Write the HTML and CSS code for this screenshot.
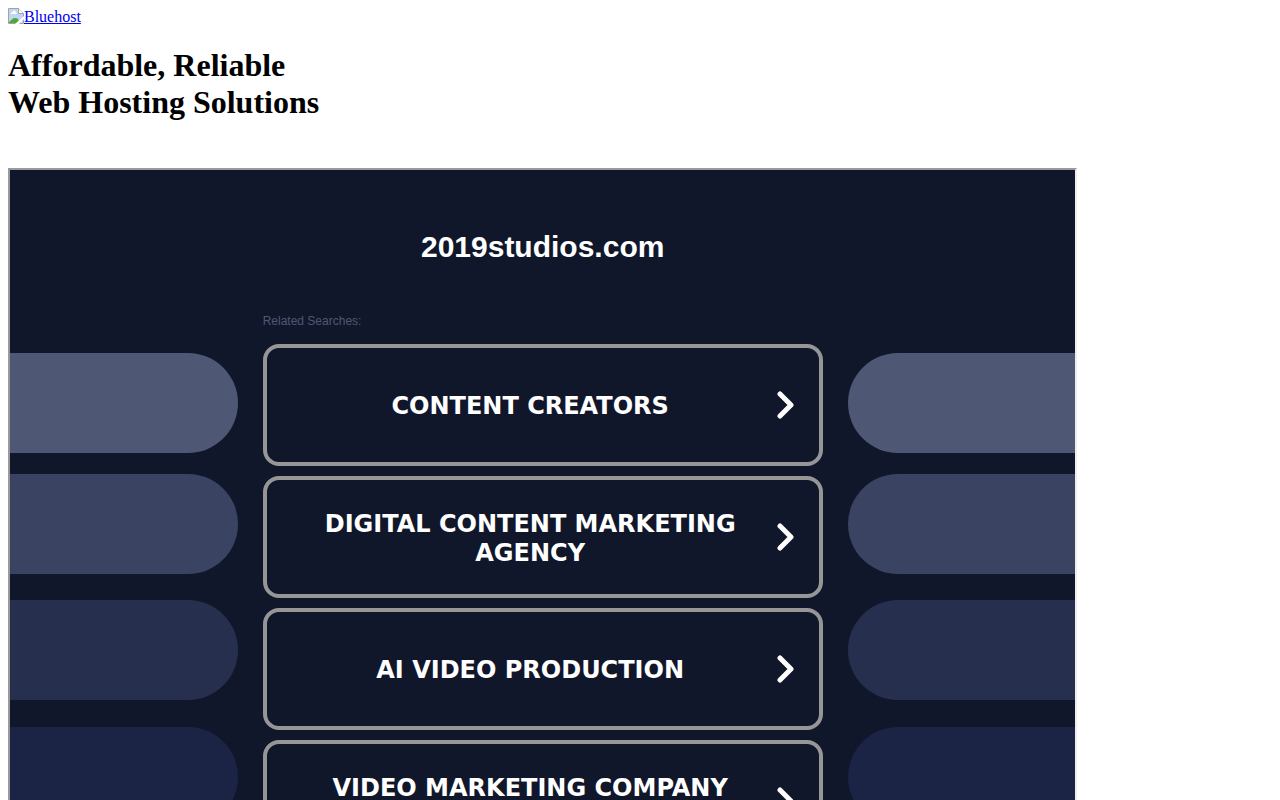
FILE: index.html
```
<!DOCTYPE html>
<html lang="en">
<head>
	<meta charset="UTF-8">
	<title>2019studios.com</title>
	<link rel="stylesheet" href="styles.css">
</head>
<body>
	<a class="logo" href="#">
		<svg width="16" height="16" viewBox="0 0 16 16" aria-hidden="true">
			<path d="M.5 .5h10l5 5v10H.5z" fill="#c3d5f5" stroke="#a3a3a3"/>
			<path d="M3 5.500a1.500 1.500 0 0 1 1.500-1.500 1.500 1.500 0 0 1 3 0 1 1 0 0 1 .500 2H3z" fill="#fff"/>
			<path d="M1 15v-1c2-1 3-4 6-4s4 2 5 5z" fill="#4ea83a"/>
			<path d="M10.500 .500v5h5" fill="#fff" stroke="#a3a3a3"/>
			<path d="M7 16l9-8v3l-5 5z" fill="#fff"/>
		</svg><span>Bluehost</span>
	</a>
	<h1>Affordable, Reliable<br>Web Hosting Solutions</h1>
	<div class="frame">
		<div class="side side-left">
			<div class="pill pill-1"></div>
			<div class="pill pill-2"></div>
			<div class="pill pill-3"></div>
			<div class="pill pill-4"></div>
		</div>
		<div class="main">
			<h2>2019studios.com</h2>
			<p class="related">Related Searches:</p>
			<a class="card" href="#">
				<span class="label">CONTENT CREATORS</span>
				<svg class="arrow" width="17" height="28" viewBox="0 0 17 28" aria-hidden="true"><path d="M3 3l11 11L3 25"/></svg>
			</a>
			<a class="card" href="#">
				<span class="label">DIGITAL CONTENT MARKETING AGENCY</span>
				<svg class="arrow" width="17" height="28" viewBox="0 0 17 28" aria-hidden="true"><path d="M3 3l11 11L3 25"/></svg>
			</a>
			<a class="card" href="#">
				<span class="label">AI VIDEO PRODUCTION</span>
				<svg class="arrow" width="17" height="28" viewBox="0 0 17 28" aria-hidden="true"><path d="M3 3l11 11L3 25"/></svg>
			</a>
			<a class="card" href="#">
				<span class="label two-lines">VIDEO MARKETING COMPANY</span>
				<svg class="arrow" width="17" height="28" viewBox="0 0 17 28" aria-hidden="true"><path d="M3 3l11 11L3 25"/></svg>
			</a>
		</div>
		<div class="side side-right">
			<div class="pill pill-1"></div>
			<div class="pill pill-2"></div>
			<div class="pill pill-3"></div>
			<div class="pill pill-4"></div>
		</div>
	</div>
</body>
</html>
```
FILE: styles.css
```
body{
	margin: 8px;
	font-family: "Liberation Serif", serif;
	font-size: 16px;
}
.logo{
	display: flex;
	width: fit-content;
	line-height: 18px;
	text-decoration: underline;
	color: #0000ee;
}
h1{
	margin: 21px 0 47px;
	font-size: 32px;
	line-height: 37px;
}
.frame{
	display: grid;
	grid-template-columns: 1fr 560px 1fr;
	column-gap: 25px;
	box-sizing: border-box;
	width: 84.6%;
	padding-bottom: 40px;
	border: 2px solid;
	border-color: #9a9a9a #eee #eee #9a9a9a;
	background-color: #11172b;
	font-family: "Liberation Sans", sans-serif;
}
.side{
	padding-top: 183px;
}
.pill{
	height: 100px;
}
.side-left .pill{
	border-radius: 0 50px 50px 0;
}
.side-right .pill{
	border-radius: 50px 0 0 50px;
}
.pill-1{
	margin-bottom: 21px;
	background-color: #4e5773;
}
.pill-2{
	margin-bottom: 26px;
	background-color: #3b4362;
}
.pill-3{
	margin-bottom: 27px;
	background-color: #262f4e;
}
.pill-4{
	background-color: #1b2444;
}
h2{
	margin: 59px 0 0;
	font-size: 30px;
	line-height: 36px;
	text-align: center;
	color: #fff;
}
.related{
	margin: 47px 0 14px;
	font-size: 12px;
	line-height: 18px;
	color: #4e5773;
}
.card{
	display: flex;
	align-items: center;
	gap: 8px;
	box-sizing: border-box;
	min-height: 122px;
	margin-bottom: 10px;
	padding: 0 25px;
	border: 4px solid #969696;
	border-radius: 16px;
	font-family: Verdana, "DejaVu Sans", sans-serif;
	font-size: 24px;
	font-weight: bold;
	line-height: 29px;
	text-align: center;
	text-decoration: none;
	color: #fff;
}
.label{
	flex: 1;
	padding-top: 3px;
}
/* keeps room for a second line */
.two-lines{
	min-height: 58px;
}
.arrow{
	flex: none;
	fill: none;
	stroke: #fff;
	stroke-width: 5;
	stroke-linecap: round;
	stroke-linejoin: round;
}
```
